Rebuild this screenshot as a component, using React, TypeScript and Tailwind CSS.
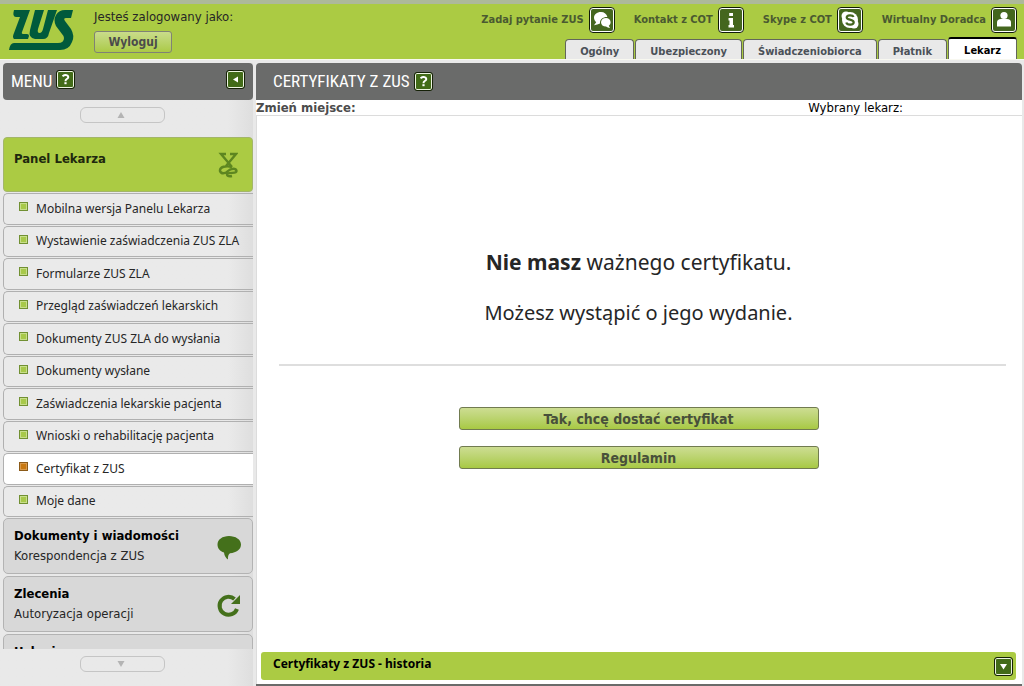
import type { ReactNode } from 'react';

const menuItems = [
  'Mobilna wersja Panelu Lekarza',
  'Wystawienie zaświadczenia ZUS ZLA',
  'Formularze ZUS ZLA',
  'Przegląd zaświadczeń lekarskich',
  'Dokumenty ZUS ZLA do wysłania',
  'Dokumenty wysłane',
  'Zaświadczenia lekarskie pacjenta',
  'Wnioski o rehabilitację pacjenta',
  'Certyfikat z ZUS',
  'Moje dane',
];

const tabs = ['Ogólny', 'Ubezpieczony', 'Świadczeniobiorca', 'Płatnik'];

function Logo() {
  return (
    <svg viewBox="0 0 66 42" className="h-[42px] w-[66px] shrink-0" role="img" aria-label="ZUS">
      <g fill="#005a3c">
        <path d="M5 1H21L13 23Q12 25 15 25H18Q20 25 20 27L19 30H5Q3 28 5 24L11 8H7Q3 8 5 1Z" />
        <path d="M26 1H35L29 20Q28 24 30.500 24Q33 24 34 20L39 1H48L40 24Q39 30 34 30H26Q19 29 21 21Z" />
        <path d="M64 1L62 9H57Q54 9 56 12L62 20Q66 27 63 33Q60 41 51 41H0Q1 34 5 34H49Q55 34 55 29Q55 27 53 25L47 17Q44 11 47 6Q50 1 56 1Z" />
      </g>
    </svg>
  );
}

function HelpLink({ label, href, children }: { label: string; href: string; children: ReactNode }) {
  return (
    <a href={href} className="flex items-center gap-[5px] whitespace-nowrap text-[11px] font-bold text-[#4a5a31]">
      <span>{label}</span>
      <svg viewBox="0 0 26 26" className="size-[26px]" aria-hidden="true">
        <rect x="0.5" y="0.5" width="25" height="25" rx="3.5" fill="#fff" stroke="#111b08" />
        <rect x="2" y="2" width="22" height="22" rx="2" fill="#44661e" />
        {children}
      </svg>
    </a>
  );
}

function SquareButton({ label, children }: { label: string; children: ReactNode }) {
  return (
    <button
      type="button"
      aria-label={label}
      className="size-[19px] shrink-0 rounded-[3px] border border-[#152007] bg-[#426b18] p-0 shadow-[inset_0_0_0_1px_#eef5e2]"
    >
      <svg viewBox="0 0 17 17" className="size-[17px]" aria-hidden="true">
        {children}
      </svg>
    </button>
  );
}

function QuestionMark() {
  return (
    <>
      <path d="M5.5 5.2Q8.3 3.2 10.4 4.5Q12.4 6.5 9.8 8Q8.5 8.8 8.5 10.2" fill="none" stroke="#fff" strokeWidth="2" />
      <rect x="7.4" y="11.2" width="2.2" height="2" fill="#fff" />
    </>
  );
}

function ScrollButton({ up }: { up?: boolean }) {
  return (
    <button
      type="button"
      aria-label={up ? 'Przewiń w górę' : 'Przewiń w dół'}
      className="ml-20 flex h-4 w-[85px] shrink-0 items-center justify-center rounded-[6px] border border-[#c5c5c5]"
    >
      <svg viewBox="0 0 8 6" className="mr-1 h-[6px] w-2" aria-hidden="true">
        <path d={up ? 'M4 0L7.5 6H0.5Z' : 'M4 6L7.5 0H0.5Z'} fill="#b4b4b4" />
      </svg>
    </button>
  );
}

function Section({ title, text, children }: { title: string; text?: string; children?: ReactNode }) {
  return (
    <a
      href="#sekcja"
      className="flex h-14 shrink-0 items-start justify-between rounded-[5px] border border-[#b3b3b3] bg-[#d8d8d8] pl-[10px] pr-[10px] pt-[7px] text-[13px]"
    >
      <span className="flex flex-col leading-5">
        <b className="text-black">{title}</b>
        {text && <span>{text}</span>}
      </span>
      {children}
    </a>
  );
}

export default function App() {
  return (
    <div className="flex h-screen flex-col bg-[#e9e9e9] font-['DejaVu_Sans_Condensed','DejaVu_Sans',sans-serif] text-[13px] text-[#262626]">
      <header className="flex h-[60px] shrink-0 border-b border-t-4 border-b-[#f8f8f0] border-t-[#adb99a] bg-[#abcb43]">
        <div className="flex pl-[9px] pt-[5px]">
          <Logo />
        </div>
        <div className="flex flex-col items-start pl-[19px] pt-[5px]">
          <span className="whitespace-nowrap leading-4">Jesteś zalogowany jako:</span>
          <button
            type="button"
            className="mt-[6px] h-[22px] w-[78px] rounded-[3px] border border-[#808275] bg-linear-to-b from-[#c9dc8a] to-[#abca45] text-[12px] font-bold leading-4 text-[#4b4b4b]"
          >
            Wyloguj
          </button>
        </div>
        <div className="ml-auto flex flex-col items-end justify-between pr-[7px] pt-[3px]">
          <nav aria-label="Kontakt" className="flex gap-[19px]">
            <HelpLink label="Zadaj pytanie ZUS" href="#pytanie">
              <path d="M12 5C7.8 5 5 7.5 5 10.8C5 12.6 6 14.2 7.2 15.2L5 18.2Q8.5 18 11 16.6C10.6 12.3 14 9.8 18.4 10C17.8 7 15.3 5 12 5Z" fill="#fff" />
              <path d="M17 11C13.9 11 12 13 12 15.3C12 18 14.2 19.6 17 19.6Q18.7 21 21 21L19.8 18.7C21 17.8 21.6 16.7 21.6 15.3C21.6 12.8 19.7 11 17 11Z" fill="#fff" />
            </HelpLink>
            <HelpLink label="Kontakt z COT" href="#kontakt">
              <path d="M11.2 6H15V9H11.2ZM10.5 11H15V18H16V20.5H10.5V18H11.5V13.5H10.5Z" fill="#fff" />
            </HelpLink>
            <HelpLink label="Skype z COT" href="#skype">
              <circle cx="13" cy="13" r="8" fill="#fff" />
              <circle cx="9" cy="9" r="4.5" fill="#fff" />
              <circle cx="17" cy="17" r="4.5" fill="#fff" />
              <path d="M16.5 10C15.7 7.7 9.7 7.6 9.7 10.5C9.7 13.3 16.7 12 16.7 15.2C16.7 18.4 10 18.3 9.3 15.5" fill="none" stroke="#44661e" strokeWidth="2.2" />
            </HelpLink>
            <HelpLink label="Wirtualny Doradca" href="#doradca">
              <circle cx="13" cy="8.5" r="3.6" fill="#fff" />
              <path d="M10 12H16Q20 12 20 15.500V19.5H6V15.5Q6 12 10 12Z" fill="#fff" />
            </HelpLink>
          </nav>
          <nav aria-label="Role" className="flex items-end gap-px text-[11px] font-bold leading-5 text-[#4b5158]">
            {tabs.map((tab) => (
              <a
                key={tab}
                href="#rola"
                className="flex h-5 items-center whitespace-nowrap rounded-t-[4px] border border-b-0 border-[#62665b] bg-[#e9e9e9] px-[14px] pt-1"
              >
                {tab}
              </a>
            ))}
            <a
              href="#lekarz"
              aria-current="page"
              className="flex h-[22px] items-center rounded-t-[3px] border-x border-t-2 border-black border-x-[#62665b] bg-white px-[15px] pt-1 text-black"
            >
              Lekarz
            </a>
          </nav>
        </div>
      </header>

      <div className="flex min-h-0 flex-1 pt-[3px]">
        <aside className="flex w-[253px] shrink-0 flex-col bg-linear-to-r from-[#e9e9e9] from-90% to-[#dedede] pl-[3px]">
          <div className="flex h-[37px] shrink-0 items-center rounded-[4px] bg-[#6a6b6a] pl-2 pr-2">
            <h2 className="font-['Roboto_Condensed','Liberation_Sans_Narrow',sans-serif] text-[17px] text-white">MENU</h2>
            <div className="mb-1 ml-1 mr-auto flex">
              <SquareButton label="Pomoc menu"><QuestionMark /></SquareButton>
            </div>
            <div className="mb-1 flex">
              <SquareButton label="Zwiń menu"><path d="M6 8.5L11 5.5V11.5Z" fill="#fff" /></SquareButton>
            </div>
          </div>
          <div className="-ml-[3px] pt-[7px]"><ScrollButton up /></div>
          <div className="mt-[14px] flex min-h-0 flex-1 flex-col overflow-hidden">
            <a href="#panel" className="flex h-[55px] shrink-0 items-center justify-between rounded-[4px] border border-[#a3b66a] bg-[#abcb43] pl-[10px] pr-[14px]">
              <b className="mb-3 text-[#20280e]">Panel Lekarza</b>
              <svg viewBox="0 0 20 26" className="h-[26px] w-5" fill="none" stroke="#5d8620" strokeWidth="2.4" aria-hidden="true">
                <path d="M8 2H3L14 15M12 2H18L8 14M14 15C8 13 1.500 15 2 19C3 22 7 22 10 19C13 16 18 16 18.500 19C18.500 22 13 20 9.500 21.500C8 23 10 25 14 24" />
              </svg>
            </a>
            <ul className="grid h-[326px] shrink-0 grid-rows-10 pt-px font-['Noto_Sans',sans-serif] text-[12px]">
              {menuItems.map((item) => {
                const active = item === 'Certyfikat z ZUS';
                return (
                  <li key={item} className="flex pb-px">
                    <a
                      href="#pozycja"
                      aria-current={active ? 'page' : undefined}
                      className={`flex flex-1 items-center whitespace-nowrap rounded-l-[5px] border border-r-0 border-[#b0b0b0] pl-[15px] ${active ? 'bg-white' : 'bg-linear-to-r from-[#eaeaea] from-90% to-[#dedede]'}`}
                    >
                      <span
                        className={`mb-1 mr-2 size-[9px] shrink-0 border ${active ? 'border-[#8b5a18] bg-[#c87810] shadow-[inset_0_0_0_1px_#d99a4c]' : 'border-[#719032] bg-[#a8c94a] shadow-[inset_0_0_0_1px_#c8de8c]'}`}
                      />
                      {item}
                    </a>
                  </li>
                );
              })}
            </ul>
            <div className="flex flex-col gap-[2px]">
              <Section title="Dokumenty i wiadomości" text="Korespondencja z ZUS">
                <svg viewBox="0 0 26 26" className="mt-2 size-[26px]" aria-hidden="true">
                  <path d="M13 2C6.500 2 1.500 5.500 1.500 10.500C1.500 14.500 4 17.300 8 18.500Q8.500 23 12 25.500Q11.500 21 14 19.200C20.500 18.800 25 15.500 25 10.500C25 5.500 19.500 2 13 2Z" fill="#44701b" />
                </svg>
              </Section>
              <Section title="Zlecenia" text="Autoryzacja operacji">
                <svg viewBox="0 0 26 26" className="mt-2 size-[26px]" aria-hidden="true">
                  <path d="M21 17A9 9 0 1 1 18.500 7" fill="none" stroke="#44701b" strokeWidth="4" />
                  <path d="M24 3V12H15Z" fill="#44701b" />
                </svg>
              </Section>
              <Section title="Usługi" />
            </div>
          </div>
          <div className="-ml-[3px] pb-[14px] pt-[7px]"><ScrollButton /></div>
        </aside>

        <main className="ml-[3px] mr-[2px] flex min-w-0 flex-1 flex-col border-b-2 border-[#6a6b6a] bg-[#e9e9e9]">
          <div className="flex h-[37px] shrink-0 items-center gap-1 rounded-t-[4px] bg-[#6a6b6a] pl-[17px]">
            <h1 className="font-['Roboto_Condensed','Liberation_Sans_Narrow',sans-serif] text-[17px] text-white">CERTYFIKATY Z ZUS</h1>
            <SquareButton label="Pomoc"><QuestionMark /></SquareButton>
          </div>
          <div className="flex h-4 shrink-0 justify-between border-b border-[#dcdcdc] bg-white leading-4">
            <b className="text-[#4c4c4c]">Zmień miejsce:</b>
            <span className="pr-[119px] text-black">Wybrany lekarz:</span>
          </div>
          <div className="flex min-h-0 flex-1 flex-col border-l border-[#dcdcdc] bg-white pb-1 pl-1 pr-[6px]">
            <section className="flex flex-col items-center pl-[18px] pr-[10px] pt-[130px] text-center">
              <p className="pr-2 font-['Noto_Sans',sans-serif] text-[21px] leading-8"><b>Nie masz</b> ważnego certyfikatu.</p>
              <p className="mt-[19px] pr-2 font-['Noto_Sans',sans-serif] text-[20px] leading-8">Możesz wystąpić o jego wydanie.</p>
              <hr className="mt-[35px] w-full border-t-2 border-[#dedede]" />
              <div className="mt-[41px] flex flex-col items-center gap-4 pr-2">
                {['Tak, chcę dostać certyfikat', 'Regulamin'].map((label) => (
                  <button
                    key={label}
                    type="button"
                    className="h-[23px] w-[360px] rounded-[3px] border border-[#717b50] bg-linear-to-b from-[#cddd92] to-[#a8c942] text-[14px] font-bold leading-5 text-[#48503a]"
                  >
                    {label}
                  </button>
                ))}
              </div>
            </section>
            <div className="mt-auto flex h-7 shrink-0 items-center justify-between rounded-[3px] bg-[#abcb43] pl-3 pr-[3px]">
              <h3 className="pb-1 font-['Noto_Sans',sans-serif] text-[12px] font-bold leading-5 text-black">Certyfikaty z ZUS - historia</h3>
              <SquareButton label="Rozwiń historię"><path d="M8.500 11.500L5 6H12Z" fill="#fff" /></SquareButton>
            </div>
          </div>
        </main>
      </div>
    </div>
  );
}
